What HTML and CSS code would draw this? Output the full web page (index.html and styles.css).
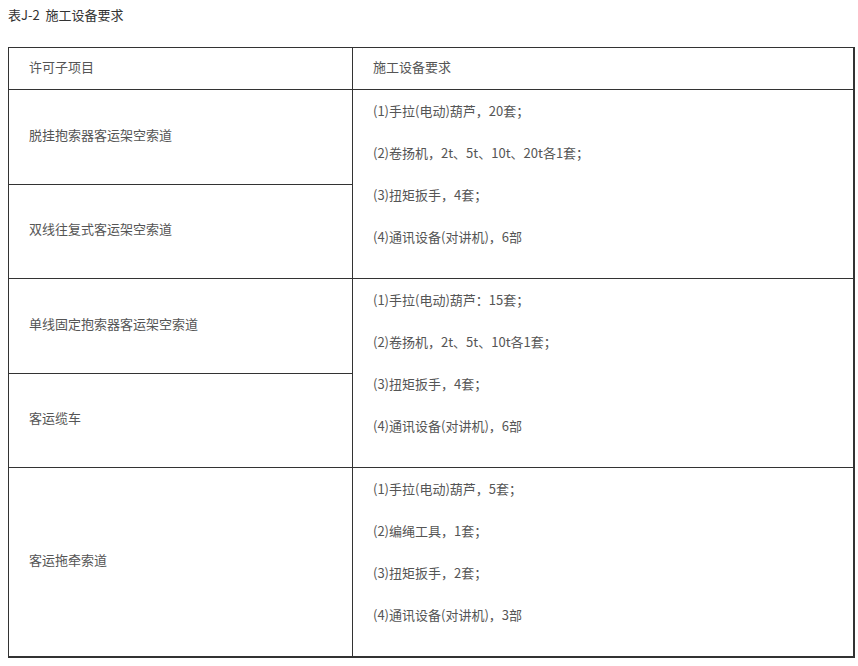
FILE: index.html
```html
<!DOCTYPE html>
<html lang="zh-CN">
<head>
<meta charset="utf-8">
<title>表J-2 施工设备要求</title>
<link rel="stylesheet" href="styles.css">
</head>
<body>
<p class="caption">表J-2&nbsp; 施工设备要求</p>
<table class="req-table">
  <colgroup>
    <col class="col-a">
    <col class="col-b">
  </colgroup>
  <tr class="head-row">
    <td>许可子项目</td>
    <td>施工设备要求</td>
  </tr>
  <tr class="half-row">
    <td>脱挂抱索器客运架空索道</td>
    <td rowspan="2" class="list-cell">
      <p>(1)手拉(电动)葫芦，20套；</p>
      <p>(2)卷扬机，2t、5t、10t、20t各1套；</p>
      <p>(3)扭矩扳手，4套；</p>
      <p>(4)通讯设备(对讲机)，6部</p>
    </td>
  </tr>
  <tr class="half-row">
    <td>双线往复式客运架空索道</td>
  </tr>
  <tr class="half-row">
    <td>单线固定抱索器客运架空索道</td>
    <td rowspan="2" class="list-cell">
      <p>(1)手拉(电动)葫芦：15套；</p>
      <p>(2)卷扬机，2t、5t、10t各1套；</p>
      <p>(3)扭矩扳手，4套；</p>
      <p>(4)通讯设备(对讲机)，6部</p>
    </td>
  </tr>
  <tr class="half-row">
    <td>客运缆车</td>
  </tr>
  <tr>
    <td>客运拖牵索道</td>
    <td class="list-cell">
      <p>(1)手拉(电动)葫芦，5套；</p>
      <p>(2)编绳工具，1套；</p>
      <p>(3)扭矩扳手，2套；</p>
      <p>(4)通讯设备(对讲机)，3部</p>
    </td>
  </tr>
</table>
</body>
</html>
```

FILE: styles.css
```css
html {
  background: #ffffff;
  overflow: hidden;
}
body {
  margin: 8px 0 0 8px;
  font-family: "Noto Sans CJK SC", "Liberation Sans", sans-serif;
  font-size: 13px;
  color: #555555;
}
.caption {
  margin: 0 0 26px 0;
  line-height: 13px;
  color: #333333;
}
.req-table {
  border-collapse: separate;
  border-spacing: 0;
  box-sizing: border-box;
  width: 847px;
  border-style: solid;
  border-color: #333333;
  border-width: 1px 2px 2px 1px;
}
.col-a {
  width: 344px;
}
.req-table td {
  border-style: solid;
  border-color: #333333;
  border-width: 0 0 1px 0;
  padding: 0 20px 5px 20px;
  vertical-align: middle;
  line-height: 21px;
}
.req-table tr td:first-child {
  border-right-width: 1px;
}
.req-table tr:last-child td {
  border-bottom-width: 0;
}
.head-row td {
  height: 42px;
  box-sizing: border-box;
}
.half-row td {
  height: 94px;
  box-sizing: border-box;
}
.req-table td.list-cell {
  vertical-align: top;
  padding: 10px 20px;
}
.list-cell p {
  margin: 0 0 21px 0;
}
```
